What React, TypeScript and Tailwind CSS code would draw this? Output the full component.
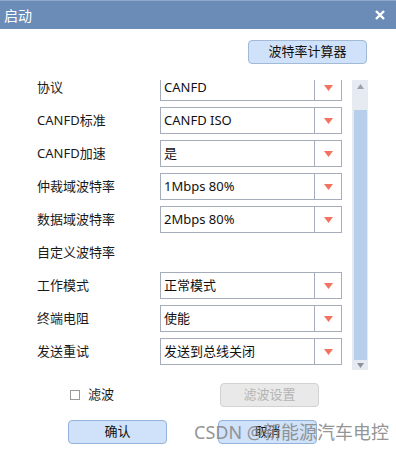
import React from "react";

const font = { fontFamily: '"Noto Sans", "Noto Sans CJK SC", sans-serif' };

function Caret() {
  return (
    <svg width="9" height="6" viewBox="0 0 9 6">
      <path d="M0 0 L9 0 L4.5 6 Z" fill="#f2735f" />
    </svg>
  );
}

function Row({ label, value }: { label: string; value?: string }) {
  return (
    <div className="flex h-[27px] items-center">
      <div className="w-[160px] pl-[37px] text-[13px] text-[#1a1a1a]">{label}</div>
      {value !== undefined && (
        <div className="flex h-[27px] w-[182px] border border-[#a6adba] bg-white">
          <div className="flex flex-1 items-center pl-[3px] text-[13px] text-[#111]">{value}</div>
          <div className="flex w-[27px] items-center justify-center border-l border-[#a6adba]">
            <Caret />
          </div>
        </div>
      )}
    </div>
  );
}

export default function App() {
  const rows: { label: string; value?: string }[] = [
    { label: "协议", value: "CANFD" },
    { label: "CANFD标准", value: "CANFD ISO" },
    { label: "CANFD加速", value: "是" },
    { label: "仲裁域波特率", value: "1Mbps 80%" },
    { label: "数据域波特率", value: "2Mbps 80%" },
    { label: "自定义波特率" },
    { label: "工作模式", value: "正常模式" },
    { label: "终端电阻", value: "使能" },
    { label: "发送重试", value: "发送到总线关闭" },
  ];
  return (
    <div className="relative h-[454px] w-[396px] overflow-hidden bg-white" style={font}>
      <div className="flex h-[29px] items-center justify-between border-t border-[#8fa9cc] bg-[#6a8cb7] pl-[4px] pr-[11px]">
        <span className="text-[14px] text-white">启动</span>
        <svg width="10" height="10" viewBox="0 0 10 10">
          <path d="M1 1 L9 9 M9 1 L1 9" stroke="white" strokeWidth="2.4" />
        </svg>
      </div>
      <div className="mt-[11px] flex pl-[248px]">
        <div className="flex h-[24px] w-[119px] items-center justify-center rounded-[4px] border border-[#a3bad6] bg-[#cfe2fa] text-[13px] text-[#111]">
          波特率计算器
        </div>
      </div>
      <div className="mt-[16px] flex h-[290px]">
        <div className="w-[352px] overflow-hidden">
          <div className="mt-[-6px] flex flex-col gap-[6px]">
            {rows.map((r) => (
              <Row key={r.label} label={r.label} value={r.value} />
            ))}
          </div>
        </div>
        <div className="flex w-[16px] flex-col bg-[#e6ebf1]">
          <div className="flex h-[30px] justify-center pt-[4px]">
            <svg width="7" height="5" viewBox="0 0 7 5">
              <path d="M0 5 L7 5 L3.5 0 Z" fill="#9aa3ad" />
            </svg>
          </div>
          <div className="mx-[2px] ml-[2px] mr-[1px] flex-1 bg-[#b8cfec]" />
          <div className="flex h-[10px] items-center justify-center">
            <svg width="7" height="5" viewBox="0 0 7 5">
              <path d="M0 0 L7 0 L3.5 5 Z" fill="#8a939d" />
            </svg>
          </div>
        </div>
      </div>
      <div className="mt-[13px] flex h-[24px] items-center">
        <div className="ml-[70px] h-[10px] w-[10px] border border-[#9a9a9a] bg-white" />
        <span className="ml-[8px] text-[13px] text-[#1a1a1a]">滤波</span>
        <div className="ml-[106px] flex h-[24px] w-[99px] items-center justify-center rounded-[4px] border border-[#d2d2d2] bg-[#e9e9e9] text-[13px] text-[#b4b4b4]">
          滤波设置
        </div>
      </div>
      <div className="mt-[13px] flex h-[24px] items-center">
        <div className="ml-[68px] flex h-[24px] w-[99px] items-center justify-center rounded-[4px] border border-[#93b3da] bg-[#cfe2fa] text-[13px] text-[#111]">
          确认
        </div>
        <div className="ml-[51px] flex h-[24px] w-[99px] items-center justify-center rounded-[4px] border border-[#93b3da] bg-[#cfe2fa] text-[13px] text-[#111]">
          取消
        </div>
      </div>
      <div className="pointer-events-none absolute left-[194px] top-[421px] text-[18px] leading-[22px] text-[#8a8a8a] opacity-90">
        CSDN @新能源汽车电控
      </div>
    </div>
  );
}
